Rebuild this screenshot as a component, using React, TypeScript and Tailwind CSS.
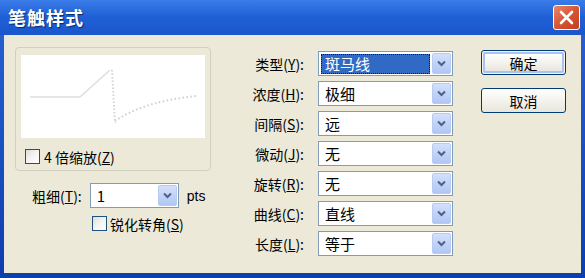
import React from "react";

const font = { fontFamily: '"Noto Sans CJK SC", "Noto Sans", sans-serif' };

function Chevron() {
  return (
    <svg width="9" height="7" viewBox="0 0 9 7">
      <path d="M1 1.5 L4.5 5 L8 1.5" fill="none" stroke="#4d6185" strokeWidth="2" />
    </svg>
  );
}

function Select({ value, selected, w }: { value: string; selected?: boolean; w: string }) {
  return (
    <div className={`${w} h-[25px] border border-[#7f9db9] bg-white flex items-stretch p-[1px]`}>
      <div className="flex-1 flex items-center pl-[1px] pr-[2px]">
        {selected ? (
          <div className="h-[20px] w-full bg-[#316ac5] text-white border border-dotted border-[#1a1a1a] flex items-center pl-[3px] text-[15px] leading-none">
            {value}
          </div>
        ) : (
          <div className="pl-[4px] text-[15px] leading-none text-black">{value}</div>
        )}
      </div>
      <div className="w-[19px] rounded-[2px] border border-[#b9cbf3] bg-gradient-to-b from-[#d3e0fb] to-[#b0c6f5] flex items-center justify-center">
        <Chevron />
      </div>
    </div>
  );
}

function Check() {
  return (
    <div className="w-[15px] h-[15px] border border-[#1c5180] bg-gradient-to-br from-[#dcdcd7] via-[#f4f4f1] to-white" />
  );
}

function Label({ text, k }: { text: string; k: string }) {
  return (
    <span className="text-[14px] text-black leading-none whitespace-nowrap">
      {text}(<span className="underline">{k}</span>):
    </span>
  );
}

export default function App() {
  const rows: [string, string, string][] = [
    ["类型", "Y", "斑马线"],
    ["浓度", "H", "极细"],
    ["间隔", "S", "远"],
    ["微动", "J", "无"],
    ["旋转", "R", "无"],
    ["曲线", "C", "直线"],
    ["长度", "L", "等于"],
  ];
  return (
    <div style={font} className="w-[585px] h-[278px] bg-gradient-to-b from-[#2a63d6] to-[#0c3fae] flex flex-col overflow-hidden">
      <div className="h-[35px] flex items-center justify-between pl-[8px] pr-[5px] bg-gradient-to-b from-[#3a7ce8] via-[#1f5fd6] to-[#1a56ca]">
        <span className="text-white font-bold text-[18px] tracking-[1px] [text-shadow:1px_1px_1px_#0a2a6a]">笔触样式</span>
        <div className="w-[27px] h-[25px] rounded-[3px] border border-white bg-gradient-to-br from-[#e8866d] via-[#d85533] to-[#c2401f] flex items-center justify-center">
          <svg width="15" height="15" viewBox="0 0 15 15">
            <path d="M2 2 L13 13 M13 2 L2 13" stroke="white" strokeWidth="2.6" strokeLinecap="round" />
          </svg>
        </div>
      </div>
      <div className="flex-1 mx-[4px] mb-[5px] bg-[#ece9d8] flex pl-[11px] pt-[12px]">
        {/* left column */}
        <div className="w-[196px] flex flex-col">
          <div className="h-[124px] rounded-[4px] border border-[#d0d0bf] px-[5px] pt-[7px]">
            <div className="h-[83px] bg-white">
              <svg width="184" height="83" viewBox="0 0 184 83">
                <path d="M9 42 L59 42 L89 15" fill="none" stroke="#dedede" strokeWidth="1.5" />
                <path d="M91 15 L94 68" fill="none" stroke="#d4d4d4" strokeWidth="2" strokeDasharray="1.5 2" />
                <path d="M94 66 C 115 52, 140 45, 175 41" fill="none" stroke="#d0d0d0" strokeWidth="2" strokeDasharray="1.5 2.5" />
              </svg>
            </div>
            <div className="flex items-center mt-[11px] ml-[4px] gap-[4px]">
              <Check />
              <span className="text-[14px] leading-none text-black">
                4 倍缩放(<span className="underline">Z</span>)
              </span>
            </div>
          </div>
          <div className="flex items-center mt-[12px] ml-[17px]">
            <Label text="粗细" k="T" />
            <div className="ml-[8px]">
              <Select value="1" w="w-[89px]" />
            </div>
            <span className="ml-[8px] text-[14px] leading-none text-black" style={{ fontFamily: '"Liberation Sans", sans-serif' }}>pts</span>
          </div>
          <div className="flex items-center mt-[8px] ml-[77px] gap-[3px]">
            <Check />
            <span className="text-[14px] leading-none text-black">
              锐化转角(<span className="underline">S</span>)
            </span>
          </div>
        </div>
        {/* middle column */}
        <div className="ml-[25px] mt-[4px] flex flex-col gap-[5px]">
          {rows.map(([t, k, v], i) => (
            <div key={i} className="flex items-center h-[25px]">
              <div className="w-[68px] flex justify-end">
                <Label text={t} k={k} />
              </div>
              <div className="ml-[14px]">
                <Select value={v} selected={i === 0} w="w-[135px]" />
              </div>
            </div>
          ))}
        </div>
        {/* buttons */}
        <div className="ml-[28px] mt-[3px] flex flex-col gap-[13px]">
          <div className="w-[85px] h-[25px] rounded-[3px] border border-[#003c74] p-[1px] bg-[#f4f3ee]">
            <div className="w-full h-full rounded-[2px] border-2 border-[#a8c3f2] bg-gradient-to-b from-white to-[#e8e6dc] flex items-center justify-center text-[14px] leading-none text-black">
              确定
            </div>
          </div>
          <div className="w-[85px] h-[25px] rounded-[3px] border border-[#003c74] bg-gradient-to-b from-white to-[#e8e6dc] flex items-center justify-center text-[14px] leading-none text-black">
            取消
          </div>
        </div>
      </div>
    </div>
  );
}
